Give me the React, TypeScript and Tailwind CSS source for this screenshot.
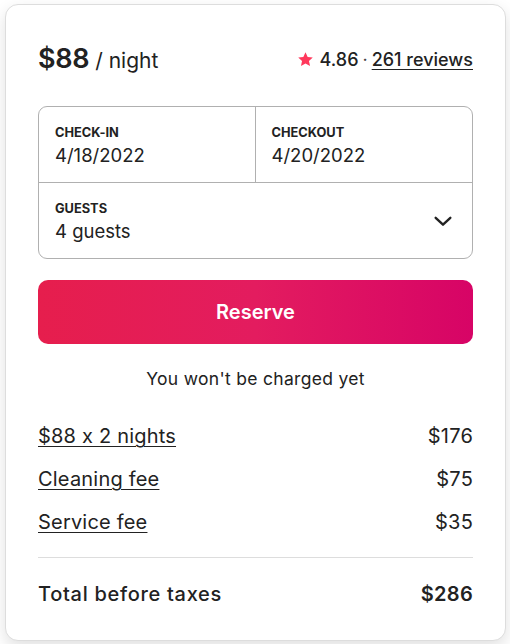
import * as React from 'react';

const lines = [
  { label: '$88 x 2 nights', amount: '$176' },
  { label: 'Cleaning fee', amount: '$75' },
  { label: 'Service fee', amount: '$35' },
];

function Star() {
  return (
    <svg viewBox="0 0 24 24" className="h-[17px] w-[17px]" fill="#ff385c">
      <path d="M12 1.8l3.05 6.6 7.2.8-5.35 4.9 1.5 7.1L12 17.6l-6.4 3.6 1.5-7.1L1.75 9.2l7.2-.8z" />
    </svg>
  );
}

function Chevron() {
  return (
    <svg viewBox="0 0 24 24" className="h-[22px] w-[22px]" fill="none" stroke="#222" strokeWidth="2.6" strokeLinecap="round" strokeLinejoin="round">
      <path d="M4 8.5l8 7.5 8-7.5" />
    </svg>
  );
}

export default function App() {
  return (
    <div className="min-h-screen bg-white py-[4px] pl-[5px] pr-[4px] font-['Inter',sans-serif] text-[#222222] [font-feature-settings:'calt'_0]">
      <div className="flex flex-col rounded-[13px] border border-[#dddddd] bg-white px-[32px] pb-[34px] pt-[38px] shadow-[0_6px_16px_rgba(0,0,0,0.12)]">
        {/* Price + rating */}
        <div className="flex items-baseline justify-between">
          <div className="flex items-baseline gap-[6px]">
            <span className="text-[27px] font-semibold leading-[32px] tracking-[-0.3px]">$88</span>
            <span className="text-[21px] leading-[24px]">/ night</span>
          </div>
          <div className="flex items-center gap-[4px] text-[18px] leading-[22px]">
            <Star />
            <span className="ml-[2px] font-medium">4.86</span>
            <span className="text-[#444]">·</span>
            <span className="font-medium underline decoration-[1px] underline-offset-[3px]">261 reviews</span>
          </div>
        </div>

        {/* Dates + guests */}
        <div className="mt-[31px] flex flex-col rounded-[9px] border border-[#b0b0b0]">
          <div className="grid h-[76px] grid-cols-2 border-b border-[#b0b0b0]">
            <div className="flex flex-col justify-center border-r border-[#b0b0b0] px-[16px] pt-[2px]">
              <span className="text-[12.8px] font-bold leading-[16px]">CHECK-IN</span>
              <span className="mt-[3px] text-[18.5px] leading-[22px]">4/18/2022</span>
            </div>
            <div className="flex flex-col justify-center px-[16px] pt-[2px]">
              <span className="text-[12.8px] font-bold leading-[16px]">CHECKOUT</span>
              <span className="mt-[3px] text-[18.5px] leading-[22px]">4/20/2022</span>
            </div>
          </div>
          <div className="flex h-[75px] items-center justify-between px-[16px]">
            <div className="flex flex-col pt-[2px]">
              <span className="text-[12.8px] font-bold leading-[16px]">GUESTS</span>
              <span className="mt-[3px] text-[18.5px] leading-[22px]">4 guests</span>
            </div>
            <div className="mr-[2px]">
              <Chevron />
            </div>
          </div>
        </div>

        {/* Reserve */}
        <button className="mt-[21px] h-[64px] w-full rounded-[10px] bg-[linear-gradient(to_right,#e61e4d_0%,#e31c5f_50%,#d70466_100%)] text-[20px] font-semibold text-white">
          Reserve
        </button>

        <p className="mt-[24px] text-center text-[17.5px] leading-[22px] tracking-[0.3px]">You won't be charged yet</p>

        {/* Price lines */}
        <div className="mt-[35px] flex flex-col gap-[21px]">
          {lines.map((l) => (
            <div key={l.label} className="flex items-center justify-between text-[20px] leading-[22px] tracking-[0.2px]">
              <span className="underline decoration-[1px] underline-offset-[3px]">{l.label}</span>
              <span>{l.amount}</span>
            </div>
          ))}
        </div>

        <div className="mt-[24px] border-t border-[#dddddd]" />

        <div className="mt-[24px] flex items-center justify-between text-[20px] font-medium leading-[24px] tracking-[0.7px]">
          <span>Total before taxes</span>
          <span className="font-semibold tracking-[0.3px]">$286</span>
        </div>
      </div>
    </div>
  );
}
